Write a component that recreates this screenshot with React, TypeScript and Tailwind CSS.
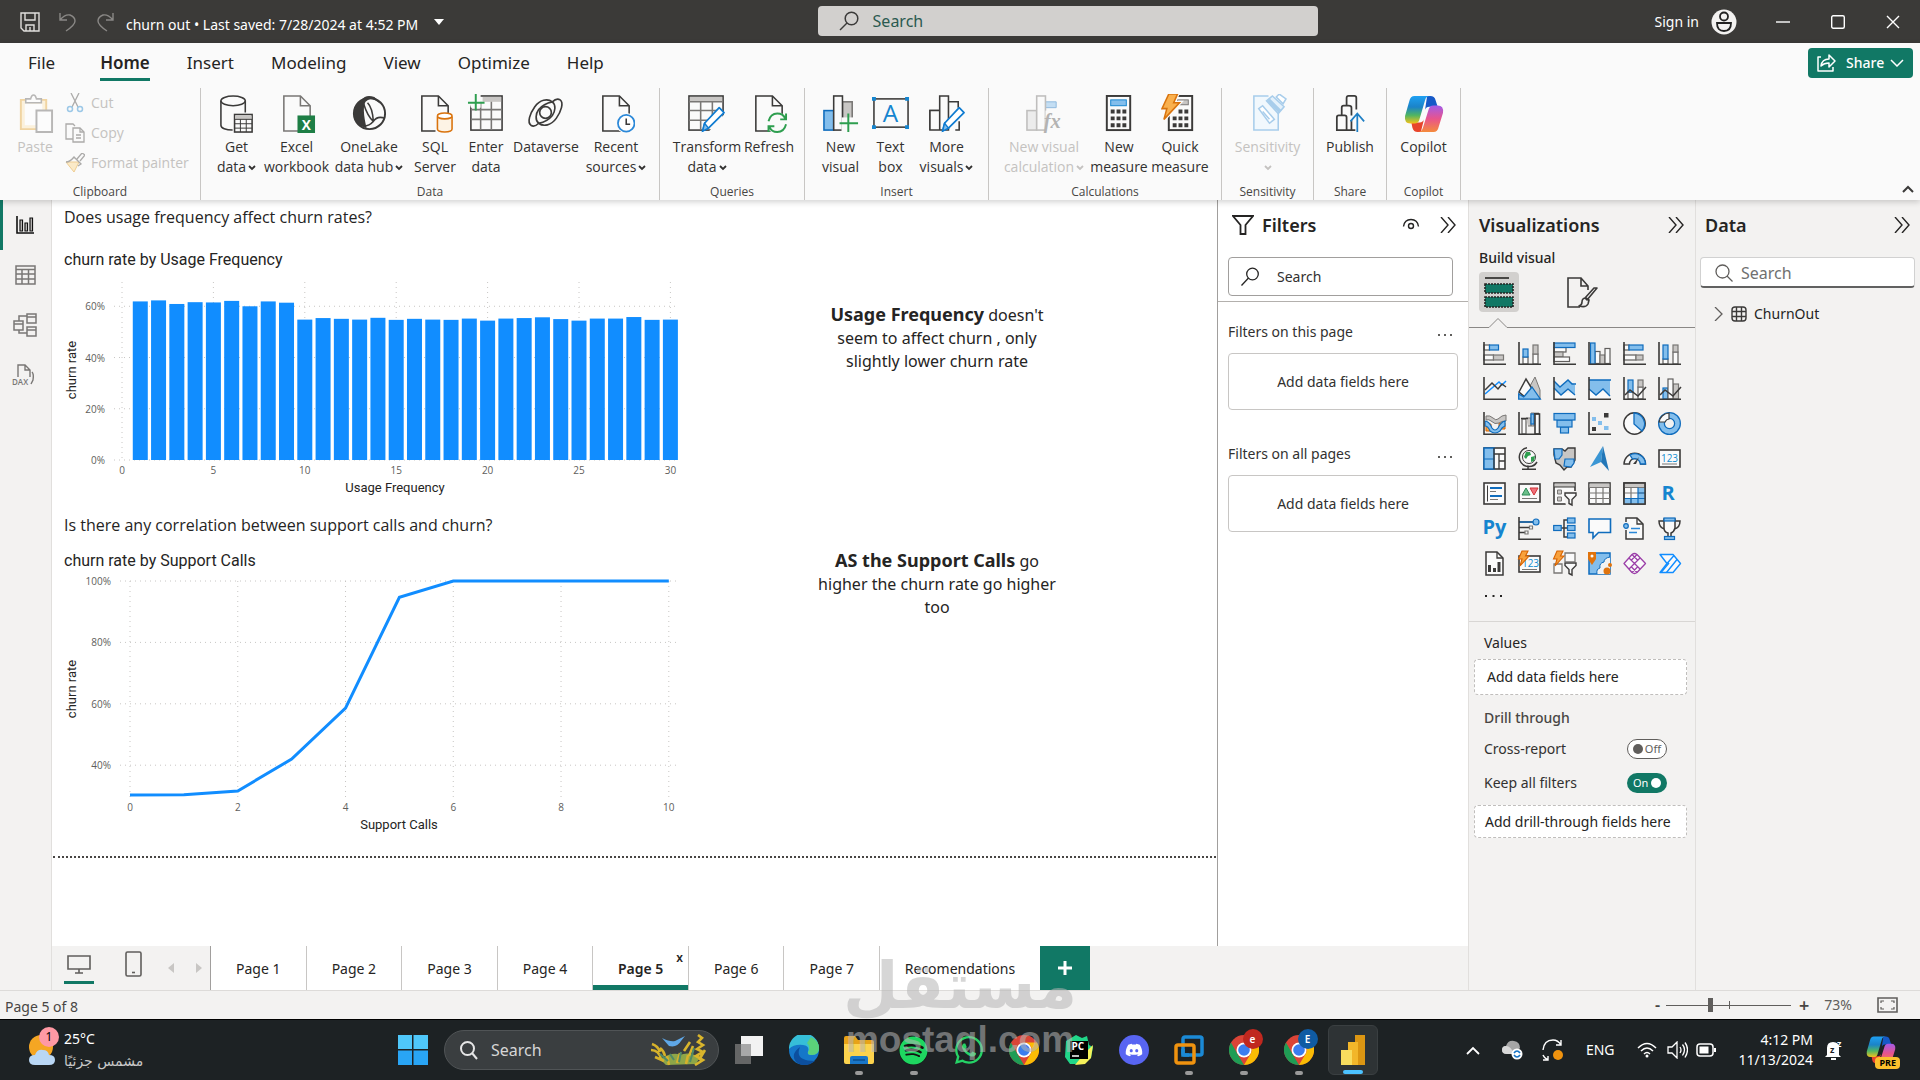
import React from "react";
import { FaDiscord, FaSpotify, FaWhatsapp } from "react-icons/fa";

const D = "#3b3a39";
const B = "#83beec";
const BL = "#0f6cbd";
const G = "#c8c6c4";
const GL = "#797775";
const W = "#fafafa";

type IconProps = { w?: number; h?: number; vb?: string; className?: string; children: React.ReactNode };
function Icon({ w = 24, h = 24, vb, className = "", children }: IconProps) {
  return (
    <svg width={w} height={h} viewBox={vb ?? `0 0 ${w} ${h}`} fill="none" className={`shrink-0 ${className}`} aria-hidden="true">
      {children}
    </svg>
  );
}

const Axes = () => <path d="M1 0v22.2h22" stroke={D} strokeWidth="1.6" />;
const Bolt = () => <path d="M4 -1h6L7.500 4H11L2 14l2-7H0.500z" fill="#f8a13c" stroke="#d86300" strokeWidth="1.100" />;
const Funnel = () => <path d="M12 11h11v2.500l-4 4V23l-3-1.500v-4l-4-4z" fill={W} stroke={D} strokeWidth="1.400" />;

function R({ x, y, w, h, c }: { x: number; y: number; w: number; h: number; c: "b" | "g" | "w" | "d" }) {
  const fill = c === "b" ? B : c === "g" ? G : W;
  const stroke = c === "b" ? BL : c === "g" ? GL : c === "w" ? "#605e5c" : D;
  return <rect x={x} y={y} width={w} height={h} fill={fill} stroke={stroke} strokeWidth={c === "d" ? 1.6 : 1.2} />;
}

const gallery: { name: string; art: React.ReactNode }[] = [
  { name: "Stacked bar chart", art: <><R x={1} y={3} w={5.5} h={5} c="w" /><R x={6.5} y={3} w={9} h={5} c="b" /><R x={1} y={13} w={9.5} h={5} c="w" /><R x={10.5} y={13} w={10} h={5} c="g" /><Axes /></> },
  { name: "Stacked column chart", art: <><R x={5} y={15} w={5} h={7} c="w" /><R x={5} y={7} w={5} h={8} c="b" /><R x={15} y={12} w={5} h={10} c="w" /><R x={15} y={3} w={5} h={9} c="g" /><Axes /></> },
  { name: "Clustered bar chart", art: <><R x={1} y={5.5} w={12} h={4.500} c="w" /><R x={1} y={10} w={9} h={5} c="g" /><R x={1} y={15} w={15.5} h={4.500} c="w" /><R x={1} y={1} w={21} h={4.500} c="b" /><Axes /></> },
  { name: "Clustered column chart", art: <><R x={7} y={9.5} w={5} h={12} c="w" /><R x={12} y={13} w={5} h={9} c="g" /><R x={17} y={6.5} w={5} h={15} c="w" /><R x={2.5} y={1} w={4.500} h={21} c="b" /><Axes /></> },
  { name: "100% stacked bar chart", art: <><R x={1} y={3} w={5} h={5} c="w" /><R x={6} y={3} w={14} h={5} c="b" /><R x={1} y={13} w={12} h={5} c="w" /><R x={13} y={13} w={7} h={5} c="g" /><Axes /></> },
  { name: "100% stacked column chart", art: <><R x={5} y={17} w={5} h={5} c="w" /><R x={5} y={3} w={5} h={14} c="b" /><R x={15} y={10} w={5} h={12} c="w" /><R x={15} y={3} w={5} h={7} c="g" /><Axes /></> },

  { name: "Line chart", art: <><path d="M2 17 16 5l3 3 4-4" stroke="#118dff" strokeWidth="1.500" /><path d="m2 13 7-7 6 6 4-5 4 3" stroke={D} strokeWidth="1.500" /><Axes /></> },
  { name: "Area chart", art: <><path d="m12 9 5-9 5 13v9H12z" fill={G} stroke={GL} /><path d="m1 15 7-13 8 13-8 6z" fill={W} stroke={D} strokeWidth="1.500" /><path d="M.700 22.200V17l5 3L14 10l8.300 12z" fill={B} stroke={BL} strokeWidth="1.300" /></> },
  { name: "Stacked area chart", art: <><path d="M1 16v6h21v-6z" fill={W} /><path d="m1 4 6 6 8-7 7 5v10l-7-7-7 7-7-7z" fill={B} /><path d="m1 4 6 6 8-7 4 4h4M1 11l7 7 7-6 7 6" stroke={BL} strokeWidth="1.400" /><Axes /></> },
  { name: "100% stacked area chart", art: <><path d="M1 12v10h21V12z" fill={W} /><path d="M1 3h21v16l-7-7-7 6-7-6z" fill={B} /><path d="M1 3h22M1 12l7 6 7-6 7 7" stroke={BL} strokeWidth="1.400" /><Axes /></> },
  { name: "Line and stacked column chart", art: <><R x={5} y={15} w={5} h={7} c="w" /><R x={5} y={3} w={5} h={12} c="b" /><R x={15} y={10} w={5} h={12} c="w" /><R x={15} y={3} w={5} h={7} c="g" /><path d="m2 18 5-5 8 6 8-9" stroke={D} strokeWidth="1.500" /><Axes /></> },
  { name: "Line and clustered column chart", art: <><R x={5} y={11} w={5} h={11} c="b" /><R x={15} y={7} w={5.500} h={15} c="g" /><R x={10} y={2} w={5} h={20} c="w" /><path d="m2 18 5-5 8 6 8-9" stroke={D} strokeWidth="1.500" /><Axes /></> },

  { name: "Ribbon chart", art: <><path d="M3 12h5v7H3zM16 11h6v6h-6z" fill="#f4a94a" stroke="#d86300" /><path d="M3 4q4-1 7 2t5 1q4-4 8-4v6q-5 0-7 2-4 2-8-2-2-2-5-1z" fill={G} stroke={GL} /><path d="M2 9q4 0 7 7 3 4 6 0 3-6 7-7v5q-3 1-5 5-5 4-10 0-2-5-5-5z" fill={B} stroke={BL} strokeWidth="1.200" /><Axes /></> },
  { name: "Waterfall chart", art: <><R x={4} y={7} w={4} h={15} c="w" /><path d="M8 6h5v8h-3M13 1h3v13h-3z" fill={G} stroke={GL} /><R x={13} y={2} w={3} h={10} c="b" /><R x={17} y={2} w={4.500} h={20} c="d" /><path d="M3 6.500h7M16 1.500h5" stroke={D} strokeWidth="1.500" /><Axes /></> },
  { name: "Funnel", art: <><R x={7.5} y={15} w={8} h={6} c="b" /><R x={4} y={8} w={15} h={7} c="b" /><R x={1} y={1.500} w={21} h={6.500} c="b" /></> },
  { name: "Scatter chart", art: <><path d="M4 5h4v4H4zM10 9h4v4h-4zM16 14h4.500v4H16z" fill={B} /><path d="M16 1h4.500v4.500H16zM4 15h4v4H4z" fill={D} /><Axes /></> },
  { name: "Pie chart", art: <><circle cx="11.500" cy="11.500" r="10.700" fill={W} stroke={D} strokeWidth="1.500" /><path d="M11 1a11 11 0 0 1 8 18l-8-7z" fill={B} stroke={BL} strokeWidth="1.300" /></> },
  { name: "Donut chart", art: <><circle cx="11.500" cy="11.500" r="8" stroke={BL} strokeWidth="7" /><circle cx="11.500" cy="11.500" r="8" stroke={B} strokeWidth="4.500" /><path d="M1 10A11 11 0 0 1 11 1v6a5 5 0 0 0-4 3z" fill={W} stroke={D} strokeWidth="1.200" /></> },

  { name: "Treemap", art: <><R x={1} y={1} w={21} h={21} c="d" /><path d="M1 1h10v21H1z" fill={B} stroke={BL} strokeWidth="1.400" /><path d="M1 12h10" stroke={BL} /><path d="M11 7h11M16 7v15M16 14h6M11 1v21" stroke={D} strokeWidth="1.300" /></> },
  { name: "Map", art: <><circle cx="11" cy="10" r="6.500" fill={W} stroke={D} /><path d="M8 5h4l1 3-3 1-2 3-2-2zM13 10l4-1-1 5-3 1z" fill="#2e9e4f" /><path d="M9 .800A9.500 9.500 0 1 0 19 15M10 18.500v3.500M4 22.200h14" stroke={D} strokeWidth="1.500" /></> },
  { name: "Filled map", art: <><path d="M1 2h8l3 2 3-3h7v12l-4 7h-4l-3 3-4-5-4-2-2-8z" fill={G} stroke={D} strokeWidth="1.400" /><path d="M1 2h8v6l-3 4H2zM12 12h9v4l-3 4-7-1z" fill={B} stroke={BL} strokeWidth="1.200" /></> },
  { name: "Azure map", art: <><path d="M15-1 2 20l11-5z" fill="#3a96d4" /><path d="m15-1 6 25-8-9z" fill="#2277b8" /></> },
  { name: "Gauge", art: <><path d="M1 17a10.700 10.700 0 0 1 21.500 0h-5a5.500 5.500 0 0 0-11 0z" fill={W} stroke={D} strokeWidth="1.400" /><path d="M7 8a10.500 10.500 0 0 1 15.500 9h-5a6 6 0 0 0-8-5z" fill={B} stroke={BL} strokeWidth="1.300" /><path d="m10 17 6-7-3 7z" fill={D} /></> },
  { name: "Card", art: <><R x={1} y={3} w={21} h={17} c="d" /><text x="11.500" y="15" textAnchor="middle" fontSize="10" fill="#118dd0" fontFamily="Open Sans">123</text><path d="M4 17h15" stroke={GL} /></> },

  { name: "Multi-row card", art: <><R x={1} y={1} w={21} h={21} c="d" /><path d="M4.500 3.500v16" stroke={D} /><path d="M7 6h12M7 14h12" stroke={BL} strokeWidth="2.200" /><path d="M7 9.500h6M7 17.500h8" stroke={GL} strokeWidth="1.200" /></> },
  { name: "KPI", art: <><R x={1} y={2} w={21} h={18} c="d" /><path d="M4 13 8 6l4 7z" fill="#6bbf8a" stroke="#2e8b57" /><path d="M12 6h8l-4 7z" fill="#f1707b" stroke="#d13438" /><path d="M4 16.500h15" stroke={GL} /></> },
  { name: "Slicer", art: <><R x={1} y={1} w={21} h={21} c="d" /><path d="M1.500 1.500h20V5h-20z" fill={G} /><path d="M1 5h21" stroke={D} /><path d="M4.500 8h4v4h-4zM4.500 15h4v4h-4z" fill={G} stroke={GL} /><path d="M10 9h14v15H13z" fill="#f3f2f1" /><Funnel /></> },
  { name: "Table", art: <><R x={1} y={1} w={21} h={21} c="d" /><path d="M1.500 1.500h20V5h-20z" fill={G} /><path d="M1 5.500h21M1 11h21M1 16.500h21M8 5v17M15 5v17" stroke={GL} strokeWidth="1.200" /></> },
  { name: "Matrix", art: <><R x={1} y={1} w={21} h={21} c="d" /><path d="M15 6h7v16H1v-5h14z" fill={B} /><path d="M1.500 1.500h20V5h-20z" fill={G} /><path d="M1 5.500h21M1 11h21M8 5v17" stroke={GL} strokeWidth="1.200" /><path d="M15 5.500v16.500M15 11h7M1 16.500h21M8 16.500V22" stroke={BL} strokeWidth="1.200" /><rect x="1" y="1" width="21" height="21" stroke={D} strokeWidth="1.500" /></> },
  { name: "R script visual", art: <text x="10" y="18" textAnchor="middle" fontSize="20" fontWeight="700" fill="#1585cf" fontFamily="Open Sans">R</text> },

  { name: "Python visual", art: <text x="11.500" y="17" textAnchor="middle" fontSize="20" fontWeight="700" fill="#1585cf" fontFamily="Open Sans">Py</text> },
  { name: "Key influencers", art: <><path d="M1 5h15M1 10.500h10M1 15.500h6" stroke={D} strokeWidth="1.400" /><path d="M1 5h15" stroke={BL} strokeWidth="1.400" /><circle cx="18" cy="5" r="3" fill={B} stroke={BL} strokeWidth="1.200" /><path d="M11.500 9h3v3h-3zM7 14h3v3H7z" fill={W} stroke={GL} strokeWidth="1.200" /><Axes /></> },
  { name: "Decomposition tree", art: <><path d="M8 11h7M15 3h-4v17h4" stroke={D} strokeWidth="1.500" /><R x={0.7} y={8.500} w={7.500} h={5} c="b" /><R x={14.500} y={1} w={7.500} h={5} c="b" /><R x={14.500} y={8.500} w={7.500} h={5} c="b" /><R x={14.500} y={16} w={7.500} h={5} c="b" /></> },
  { name: "Q&A", art: <path d="M1 2h21.500v13.500H10.500L5 21v-5.500H1z" fill={W} stroke={BL} strokeWidth="1.600" /> },
  { name: "Narrative", art: <><path d="M3 1h11l6 6v15H3z" fill={W} stroke={D} strokeWidth="1.500" /><path d="M14 1v6h6" stroke={D} strokeWidth="1.300" /><path d="M0 5h6v8H0z" fill="#f3f2f1" /><circle cx="3" cy="9" r="2.300" fill={B} stroke={BL} strokeWidth="1.200" /><path d="M8 11.500h9M6 15.500h8" stroke="#2b88d8" strokeWidth="1.300" /></> },
  { name: "Goals", art: <><path d="M6 4H1q0 7 6 8M17 4h5q0 7-6 8" stroke={D} strokeWidth="1.500" /><path d="M6 2h11v9q-1 4-4 5v4h-3v-4q-4-1-4-5z" fill={W} stroke={D} strokeWidth="1.500" /><R x={6} y={1} w={11} h={3} c="b" /><R x={6.500} y={19.500} w={10} h={3} c="b" /></> },

  { name: "Paginated report", art: <><path d="M3 0h11l6 6v17H3z" fill={W} stroke={D} strokeWidth="1.500" /><path d="M14 0v6h6" stroke={D} strokeWidth="1.300" /><path d="M5 13h3v7H5zM10 16h3v4h-3zM14.500 10h3v10h-3z" fill={D} /></> },
  { name: "Card (new)", art: <><R x={1} y={4} w={21} h={16} c="d" /><text x="12.500" y="15" textAnchor="middle" fontSize="10" fill="#118dd0" fontFamily="Open Sans">123</text><path d="M4 17.500h15" stroke={GL} /><Bolt /></> },
  { name: "Slicer (new)", art: <><path d="M12 1h10v9H12zM1 12h8v9H1z" fill={W} stroke={GL} strokeWidth="1.300" /><Bolt /><path d="M10 10h14v14H12z" fill="#f3f2f1" /><Funnel /></> },
  { name: "ArcGIS map", art: <><path d="M1 1h21v21H1z" fill={B} stroke={BL} strokeWidth="1.500" /><path d="M9 22q-1-5 3-6-1-5 4-6 0-4 6-5v17z" fill="#f3f2f1" /><path d="M9 22q-1-5 3-6-1-5 4-6 0-4 6-5" stroke={BL} /><path d="M0 0h8v7l-4 6-4-6z" fill="#e0730c" /><circle cx="4" cy="4" r="1.500" fill={W} /><circle cx="19" cy="19" r="3.500" fill="#e0730c" /><circle cx="22" cy="13" r="2" fill="#e0730c" /></> },
  { name: "Power Apps", art: <g stroke="#9b3fa8" strokeWidth="1.300" strokeLinejoin="round" fill={W}><path d="m1 11.500 8-9q2.500-2 5 0l8.500 9-8.500 9q-2.500 2-5 0z" /><path d="m6 6 5.500 5.500L6 17M11.500 11.500 17 6M11.500 11.500 17 17M9 2.500l5.500 5.500M14 2.500 8.500 8M9 20.500l5.500-5.500M14 20.500 8.500 15" fill="none" /></g> },
  { name: "Power Automate", art: <g stroke="#118dff" strokeWidth="1.400" strokeLinejoin="round" fill={W}><path d="M2 2.500h13l7.500 9-7.500 9H2l7-9z" /><path d="m9 11.500 7-8M3 20.500l8-9.500M8.500 20.500 19 7.500" fill="none" /></g> },
];

/* ---------- Ribbon drawings, 38 x 40 each ---------- */
const sw = { strokeWidth: 1.6 };
const Page = ({ c = D }: { c?: string }) => <><path d="M6 2h17l10 10v26H6z" fill={W} stroke={c} {...sw} /><path d="M23 2v10h10" stroke={c} {...sw} /></>;
const Pencil = () => <path d="m15 38 2-8L32 14l5 5-16 16z" fill="#fff" stroke="#0f7bd0" strokeWidth="1.800" strokeLinejoin="round" />;
const PencilTip = () => <path d="m15 38 2-8 4 5z" fill={B} stroke="#0f7bd0" strokeWidth="1.400" />;

const art = {
  getData: <><path d="M3 7v25c0 3 5 5 12 5M28 7v12" stroke={D} {...sw} /><ellipse cx="15.500" cy="7" rx="12.500" ry="5" fill={W} stroke={D} {...sw} /><rect x="17" y="21" width="18" height="18" fill={W} stroke={D} {...sw} /><path d="M17.500 22h17v4h-17z" fill={G} /><path d="M17 26h18M17 30.500h18M17 35h18M23 26v13M29 26v13" stroke={D} /></>,
  excel: <><Page c={GL} /><rect x="20" y="22" width="18" height="18" fill="#1e7e45" /><text x="29" y="36.500" textAnchor="middle" fontSize="14" fontWeight="700" fill="#fff" fontFamily="Open Sans">X</text></>,
  onelake: <><circle cx="20" cy="20" r="16" fill={W} stroke={D} strokeWidth="2" /><path d="M12 6q4-6 13-3 4 3 6 7-10-8-15-2-4 6 1 27Q5 32 4 22 4 12 12 6z" fill={D} /><path d="M14 10q4 13 10 18 4-6 12-3M18 9q5 5 6 19-4 5-10 5" stroke={D} {...sw} /></>,
  sql: <><Page /><path d="M20 20h18v20H20z" fill={W} /><path d="M22 23v13c0 4 15 4 15 0V23" fill="#fdf3e5" stroke="#d9730d" {...sw} /><ellipse cx="29.500" cy="22.500" rx="7.500" ry="3" fill="#fff" stroke="#d9730d" {...sw} /></>,
  enter: <><rect x="4" y="2" width="32" height="35" fill={W} stroke={D} {...sw} /><path d="M16 3h19v5H16z" fill={G} /><path d="M4 16h32M4 26h32M14 8v29M25 8v29" stroke={GL} {...sw} /><path d="M0 0h14v14H4z" fill={W} /><path d="M9 0v17M1 9h17" stroke="#2e9e4f" strokeWidth="2" /></>,
  dataverse: <g stroke={D} strokeWidth="1.700"><path d="M26 8C21 4 13 6 8 13 3 20 0 29 4 32c3 2 6 0 8-2" /><path d="M12 30c5 4 13 2 18-5 5-7 8-16 4-19-3-2-6 0-8 2" /><path d="M12 30c-4-3-3-10 0-14 4-5 9-7 14-8M26 8c4 3 3 10 0 14-4 5-9 7-14 8" /><circle cx="19" cy="19" r="6" /></g>,
  recent: <><Page /><circle cx="30" cy="30" r="10.500" fill={W} /><circle cx="30" cy="30" r="8.500" fill="#fff" stroke="#2b88d8" strokeWidth="1.800" /><path d="M30 25v6h4" stroke={D} {...sw} /></>,
  transform: <><rect x="1" y="2" width="35" height="35" fill={W} stroke={D} {...sw} /><path d="M2 3h33v5H2z" fill={G} /><path d="M1 8h35M1 17h35M1 27h26M13 8v29M25 8v20" stroke={GL} {...sw} /><path d="M20 40 38 20v20z" fill={W} /><Pencil /><PencilTip /></>,
  refresh: <><Page /><circle cx="28" cy="30" r="11" fill={W} /><path d="M19 28q2-8 9-8 6 0 8 5M37 20v6h-6M37 31q-2 8-9 8-6 0-8-5M19 39v-6h6" stroke="#2e9e4f" strokeWidth="2" /></>,
  newVisual: <><rect x="2" y="17" width="10" height="20" fill={B} stroke={BL} {...sw} /><rect x="21" y="8" width="10" height="29" fill={G} stroke={GL} {...sw} /><rect x="12" y="2" width="9" height="35" fill={W} stroke={D} {...sw} /><path d="M20 24h16v14H20z" fill={W} /><path d="M27 20v19M18 30h19" stroke="#2e9e4f" strokeWidth="2" /></>,
  textBox: <><rect x="2" y="5" width="35" height="29" fill={W} stroke={D} {...sw} /><path d="M0 3h4v4H0zM34 3h4v4h-4zM0 32h4v4H0zM34 32h4v4h-4z" fill="#1585cf" /><text x="19" y="29" textAnchor="middle" fontSize="25" fill="#1585cf" fontFamily="Open Sans">A</text></>,
  moreVisuals: <><path d="M2 37V17h10M21 8h10v6M28 37h4v-9" stroke={D} {...sw} /><path d="M2 17h10v20H2zM12 2h9v35h-9z" fill={W} stroke={D} {...sw} /><Pencil /><PencilTip /></>,
  visualCalc: <g opacity=".45"><rect x="2" y="17" width="10" height="20" fill="#ddd" stroke={GL} {...sw} /><path d="M21 8h11v6H21z" fill={B} stroke={BL} /><rect x="12" y="2" width="9" height="35" fill={W} stroke={GL} {...sw} /><path d="M21 17h15v20H21z" fill={W} /><text x="28" y="35" textAnchor="middle" fontSize="21" fontStyle="italic" fontWeight="700" fill="#605e5c" fontFamily="Liberation Serif">fx</text></g>,
  measure: <><rect x="7" y="2" width="24" height="35" fill={W} stroke={D} strokeWidth="2" /><rect x="11" y="6" width="16" height="6" fill={B} stroke="#1585cf" /><path d="M11 16h4v4h-4zM17 16h4v4h-4zM23 16h4v4h-4zM11 23h4v4h-4zM17 23h4v4h-4zM23 23h4v4h-4zM11 30h4v4h-4zM17 30h4v4h-4zM23 30h4v4h-4z" fill={D} /></>,
  quick: <><rect x="8" y="2" width="24" height="35" fill={W} stroke={D} strokeWidth="2" /><rect x="17" y="6" width="11" height="5" fill={G} stroke={GL} /><path d="M12 23h4v4h-4zM18 16h4v4h-4zM24 16h4v4h-4zM18 23h4v4h-4zM24 23h4v4h-4zM12 30h4v4h-4zM18 30h4v4h-4zM24 30h4v4h-4z" fill={D} /><path d="M8 0h9l-4 9h6L3 26l3-11H1z" fill="#f9b04e" stroke="#fafafa" strokeWidth="4" /><path d="M8 0h9l-4 9h6L3 26l3-11H1z" fill="#f9b04e" stroke="#d9730d" strokeWidth="1.600" /></>,
  sensitivity: <g stroke="#a8cdeb" {...sw}><path d="M20 2H5v35h25V19" fill="#f1f8fd" /><path d="m10 15 4-3 12 14-5 4z" fill="#fff" /><path d="m14 18 7 8" /><path d="m18 7 6-5 12 11-6 7z" fill="#e4f1fb" /><path d="m20 6 12 12" strokeWidth="4" /><path d="m28 3 3-3 7 5-3 5z" fill="#fff" /></g>,
  publish: <><path d="M16 12V4q0-2 2-2h6q2 0 2 2v12M11 22V14q0-2 2-2h5q3 0 3 2v8M21 37H6V24q0-2 2-2h6q2 0 2 2v13M21 27v10M21 37h4" stroke={D} strokeWidth="1.800" /><path d="M27 39V21M20 28l7-8 7 8" stroke="#1f7fc4" strokeWidth="1.800" /></>,
};

function CopilotLogo({ size, id }: { size: number; id: string }) {
  return (
    <svg width={size} height={size} viewBox="0 0 38 38" aria-hidden="true">
      <defs>
        <linearGradient id={`${id}a`} x1="0" y1="0" x2="0" y2="1"><stop offset="0" stopColor="#1ea0f2" /><stop offset=".4" stopColor="#1b83c8" /><stop offset=".7" stopColor="#4fb562" /><stop offset="1" stopColor="#f3c21b" /></linearGradient>
        <linearGradient id={`${id}b`} x1="0" y1="0" x2="0" y2="1"><stop offset="0" stopColor="#a35be8" /><stop offset=".5" stopColor="#e8548c" /><stop offset="1" stopColor="#f58a3c" /></linearGradient>
      </defs>
      <path d="M22 2h3q4 0 5 4l2 6h-8q-3 0-4 3z" fill="#1659c7" />
      <path d="M16 36h-3q-4 0-5-4l-1-5h8q3 0 4-3z" fill="#e8452c" />
      <path d="M10 2h15q-4 0-5 4l-5 17q-1 5-5 5H6q-6 0-5-7L5 7q1-5 5-5z" fill={`url(#${id}a)`} />
      <path d="M28 36H13q4 0 5-4l5-16q1-5 5-5h4q6 0 5 7l-4 13q-1 5-5 5z" fill={`url(#${id}b)`} />
    </svg>
  );
}

const Caret = () => (
  <svg width="8" height="6" viewBox="0 0 8 6" fill="none" className="ml-0.5 inline-block" aria-hidden="true">
    <path d="m1 1 3 3 3-3" stroke="currentColor" strokeWidth="1.8" />
  </svg>
);

type Item = { w: string; icon: React.ReactNode; l1: string; l2?: string; drop?: boolean; off?: boolean };
function RibbonItem({ w, icon, l1, l2, drop, off }: Item) {
  return (
    <button type="button" disabled={off} className={`flex flex-col items-center pt-1.5 ${w} ${off ? "text-[#c4c2c0]" : "text-[#323130]"}`}>
      {icon}
      <span className="mt-[3px] text-sm leading-5 whitespace-nowrap">
        {l1}
        <br />
        {l2}
        {drop && <Caret />}
      </span>
    </button>
  );
}
const Rib = ({ children }: { children: React.ReactNode }) => <Icon w={38} h={40} vb="0 0 39 41">{children}</Icon>;

function RibbonGroup({ w, label, children }: { w: string; label: string; children: React.ReactNode }) {
  return (
    <section className={`flex flex-col justify-between border-r border-[#c8c6c4] ${w}`}>
      <div className="flex justify-center">{children}</div>
      <h2 className="text-center text-xs leading-4 text-[#484644]">{label}</h2>
    </section>
  );
}

const groups: { w: string; label: string; items: Item[] }[] = [
  {
    w: "w-[459px]", label: "Data", items: [
      { w: "w-[51px]", icon: <Rib>{art.getData}</Rib>, l1: "Get", l2: "data", drop: true },
      { w: "w-[69px]", icon: <Rib>{art.excel}</Rib>, l1: "Excel", l2: "workbook" },
      { w: "w-[76px]", icon: <Rib>{art.onelake}</Rib>, l1: "OneLake", l2: "data hub", drop: true },
      { w: "w-[56px]", icon: <Rib>{art.sql}</Rib>, l1: "SQL", l2: "Server" },
      { w: "w-[46px]", icon: <Rib>{art.enter}</Rib>, l1: "Enter", l2: "data" },
      { w: "w-[74px]", icon: <Rib>{art.dataverse}</Rib>, l1: "Dataverse" },
      { w: "w-[66px]", icon: <Rib>{art.recent}</Rib>, l1: "Recent", l2: "sources", drop: true },
    ],
  },
  {
    w: "w-[145px]", label: "Queries", items: [
      { w: "w-[74px]", icon: <Rib>{art.transform}</Rib>, l1: "Transform", l2: "data", drop: true },
      { w: "w-[50px]", icon: <Rib>{art.refresh}</Rib>, l1: "Refresh" },
    ],
  },
  {
    w: "w-[184px]", label: "Insert", items: [
      { w: "w-[48px]", icon: <Rib>{art.newVisual}</Rib>, l1: "New", l2: "visual" },
      { w: "w-[52px]", icon: <Rib>{art.textBox}</Rib>, l1: "Text", l2: "box" },
      { w: "w-[60px]", icon: <Rib>{art.moreVisuals}</Rib>, l1: "More", l2: "visuals", drop: true },
    ],
  },
  {
    w: "w-[233px]", label: "Calculations", items: [
      { w: "w-[88px]", icon: <Rib>{art.visualCalc}</Rib>, l1: "New visual", l2: "calculation", drop: true, off: true },
      { w: "w-[62px]", icon: <Rib>{art.measure}</Rib>, l1: "New", l2: "measure" },
      { w: "w-[60px]", icon: <Rib>{art.quick}</Rib>, l1: "Quick", l2: "measure" },
    ],
  },
  { w: "w-[92px]", label: "Sensitivity", items: [{ w: "w-[80px]", icon: <Rib>{art.sensitivity}</Rib>, l1: "Sensitivity", drop: true, off: true }] },
  { w: "w-[73px]", label: "Share", items: [{ w: "w-[60px]", icon: <Rib>{art.publish}</Rib>, l1: "Publish" }] },
  { w: "w-[74px]", label: "Copilot", items: [{ w: "w-[60px]", icon: <CopilotLogo size={40} id="rib" />, l1: "Copilot" }] },
];

function TitleBar() {
  return (
    <header className="flex h-[43px] shrink-0 items-center bg-[#3b3a38] text-white">
      <div className="flex flex-[19] items-center">
        <button type="button" aria-label="Save" className="ml-5">
          <Icon w={20} h={20}><path d="M1 1h18v18H4l-3-3zM5 1v7h10V1M6 19v-6h8v6M10 15v4" stroke="#e1dfdd" strokeWidth="1.4" /></Icon>
        </button>
        <button type="button" aria-label="Undo" className="ml-[19px]">
          <Icon w={18} h={20}><path d="M1 1v7h7M1 8q5-6 10-5 5 2 5 6 0 4-9 10" stroke="#8a8886" strokeWidth="1.4" /></Icon>
        </button>
        <button type="button" aria-label="Redo" className="ml-[19px]">
          <Icon w={18} h={20}><path d="M17 1v7h-7M17 8q-5-6-10-5-5 2-5 6 0 4 9 10" stroke="#8a8886" strokeWidth="1.4" /></Icon>
        </button>
        <h1 className="ml-3 pt-1.5 text-sm whitespace-nowrap">churn out • Last saved: 7/28/2024 at 4:52 PM</h1>
        <button type="button" aria-label="File details" className="ml-4">
          <Icon w={10} h={6}><path d="M0 0h10L5 6z" fill="#fff" /></Icon>
        </button>
      </div>
      <label className="mb-px flex h-[30px] w-[500px] items-center rounded-sm bg-[#d2d0ce] pl-[21px] text-[#3b3a39]">
        <Icon w={20} h={20}><circle cx="12.5" cy="7.500" r="6.300" stroke="currentColor" strokeWidth="1.5" /><path d="m8 12-7 7" stroke="currentColor" strokeWidth="1.5" /></Icon>
        <input aria-label="Search" placeholder="Search" className="ml-3.5 min-w-0 flex-1 bg-transparent text-base outline-none placeholder:text-[#2a5a50]" />
      </label>
      <div className="flex flex-[14] items-center justify-end">
        <button type="button" className="mr-3 text-sm">Sign in</button>
        <Icon w={26} h={26}><circle cx="13" cy="13" r="12.500" fill="#f3f2f1" /><circle cx="13" cy="7.500" r="4" stroke="#222" strokeWidth="1.8" /><path d="M6 14h14q0 8-7 8t-7-8z" stroke="#222" strokeWidth="1.8" /></Icon>
        <button type="button" aria-label="Minimize" className="ml-[39px]"><Icon w={14} h={14}><path d="M0 7h14" stroke="#fff" strokeWidth="1.4" /></Icon></button>
        <button type="button" aria-label="Maximize" className="ml-[41px]"><Icon w={14} h={14}><rect x=".7" y=".7" width="12.600" height="12.600" rx="1.500" stroke="#fff" strokeWidth="1.400" /></Icon></button>
        <button type="button" aria-label="Close" className="mr-5 ml-[41px]"><Icon w={14} h={14}><path d="m1 1 12 12M13 1 1 13" stroke="#fff" strokeWidth="1.400" /></Icon></button>
      </div>
    </header>
  );
}

const menu = ["File", "Home", "Insert", "Modeling", "View", "Optimize", "Help"];

function Menu() {
  return (
    <nav className="flex h-[45px] items-start bg-[#fafafa] pr-[7px] pl-7 text-[17px] text-[#252423]">
      <ul className="flex gap-[37px] pt-1">
        {menu.map((m) => (
          <li key={m} className={m === "File" ? "mr-[8px]" : ""}>
            <button type="button" className={`border-b-[3px] pt-1 pb-[3px] leading-6 ${m === "Home" ? "border-[#117865] font-semibold" : "border-transparent"}`}>{m}</button>
          </li>
        ))}
      </ul>
      <button type="button" className="mt-[5px] ml-auto flex h-[30px] w-[105px] items-center rounded bg-[#117865] pl-2 text-sm font-medium text-white">
        <Icon w={20} h={20}><path d="M5 4H2v14h15v-4M5 13q1-7 8-7V2l6 6-6 6v-4q-5 0-8 3z" stroke="#fff" strokeWidth="1.500" strokeLinejoin="round" /></Icon>
        <span className="ml-2.5">Share</span>
        <Icon w={14} h={8} className="ml-1.5"><path d="m1 1 6 6 6-6" stroke="#fff" strokeWidth="1.500" /></Icon>
      </button>
    </nav>
  );
}

function Ribbon() {
  return (
    <div className="relative z-10 shrink-0 bg-[#fafafa] shadow-[0_2px_6px_rgba(0,0,0,0.18)]">
      <Menu />
      <div className="flex h-28 items-stretch font-['Open_Sans']">
        <section className="flex w-[201px] flex-col justify-between border-r border-[#c8c6c4] text-[#c4c2c0]">
          <div className="flex pl-[15px]">
            <button type="button" disabled className="flex w-[40px] flex-col items-center pt-1.5 text-sm">
              <Rib><g opacity=".5"><path d="M5 6h26v30H5z" fill="#fde9c0" stroke="#e8b04c" strokeWidth="2" /><path d="M9 10h18v22H9z" fill="#fff" /><path d="M10 9V5h5q1-4 3-4t3 4h5v4z" fill="#fff" stroke={GL} strokeWidth="1.600" /><path d="M21 17h16v22H21z" fill="#fff" stroke={GL} strokeWidth="2" /></g></Rib>
              <span className="mt-[3px] leading-5">Paste</span>
            </button>
            <ul className="ml-2.5 flex flex-col gap-2.5 pt-[5px] text-sm leading-5">
              <li><button type="button" disabled className="flex items-center gap-1.5"><Icon w={20} h={20}><g opacity=".6"><path d="m6 0 7 14M14 0 7 14" stroke={GL} strokeWidth="1.300" /><circle cx="5" cy="16" r="2.500" stroke="#5fa8dc" strokeWidth="1.500" /><circle cx="15" cy="16" r="2.500" stroke="#5fa8dc" strokeWidth="1.500" /></g></Icon>Cut</button></li>
              <li><button type="button" disabled className="flex items-center gap-1.5"><Icon w={20} h={20}><g opacity=".6" stroke={GL} strokeWidth="1.300"><path d="M8 16H1V1h7l2 2M8 5h7l4 4v10H8z" /><path d="M15 5v4h4M11 12h5M11 15h5" /></g></Icon>Copy</button></li>
              <li><button type="button" disabled className="flex items-center gap-1.5"><Icon w={20} h={20}><g opacity=".6"><path d="M1 9h13l-5 10z" fill="#fde0a8" stroke="#e8b04c" /><path d="m9 4 7 7M1 9q4 0 8-5l7 7-3 2M12 6l5-6 3 2-5 6" stroke={GL} strokeWidth="1.300" /></g></Icon>Format painter</button></li>
            </ul>
          </div>
          <h2 className="text-center text-xs leading-4 text-[#484644]">Clipboard</h2>
        </section>
        {groups.map((g) => (
          <RibbonGroup key={g.label} w={g.w} label={g.label}>
            {g.items.map((i) => <RibbonItem key={i.l1 + (i.l2 ?? "")} {...i} />)}
          </RibbonGroup>
        ))}
        <button type="button" aria-label="Collapse ribbon" className="mt-auto mr-1.5 mb-[7px] ml-auto">
          <Icon w={12} h={8}><path d="m1 7 5-5 5 5" stroke={D} strokeWidth="2" /></Icon>
        </button>
      </div>
    </div>
  );
}

function Rail() {
  return (
    <nav className="flex w-[52px] shrink-0 flex-col border-r border-[#e1dfdd] bg-[#f3f2f1]">
      <button type="button" aria-label="Report view" className="flex h-[50px] items-center border-l-[3px] border-[#117865] pl-[13px]">
        <Icon w={18} h={20}><path d="M1 1v17h17" stroke="#111" strokeWidth="1.600" /><path d="M4 5h2.500v11H4zM9 8h2.500v8H9zM14 3h2.500v13H14z" fill={G} stroke="#111" strokeWidth="1.200" /></Icon>
      </button>
      <button type="button" aria-label="Table view" className="flex h-[50px] items-center pl-[15px]">
        <Icon w={21} h={20}><path d="M1 1h19v18H1zM1 4.500h19M1 9h19M1 14h19M7 4.500V19M13.500 4.500V19" stroke={GL} strokeWidth="1.500" /></Icon>
      </button>
      <button type="button" aria-label="Model view" className="flex h-[50px] items-center pl-[13px]">
        <Icon w={24} h={24}><path d="M1 8h9v9H1zM14 1h9v9h-9zM14 14h9v9h-9zM1 11h9M14 4h9M14 17h9M6 8V3h8M6 17v3h8" stroke={GL} strokeWidth="1.500" /></Icon>
      </button>
      <button type="button" aria-label="DAX query view" className="flex h-[50px] items-center pl-[12px]">
        <Icon w={24} h={22}><path d="M6 13V1h7l5 5v7M13 1v5h5M20 8q2 2 1 8l-2 4" stroke={GL} strokeWidth="1.400" /><text x="0" y="21" fontSize="8" fontWeight="600" fill={GL} fontFamily="Open Sans">DAX</text></Icon>
      </button>
    </nav>
  );
}

/* ---------- Charts ---------- */
const usage = [61.9, 62.3, 60.9, 61.6, 61.5, 62.1, 60, 61.9, 61.4, 54.8, 55.4, 55.1, 54.8, 55.5, 54.7, 55.1, 54.8, 54.7, 55.2, 54.4, 55.2, 55.4, 55.7, 55, 54.4, 55.2, 55.2, 55.8, 54.7, 54.8];
const calls = [30.3, 30.4, 31.6, 42, 58.600, 94.700, 100, 100, 100, 100, 100];
const grid = { stroke: "#c8c6c4", strokeWidth: 1, strokeDasharray: "1 4" };
const axisTitle = { textAnchor: "middle" as const, fontSize: 13, fontFamily: "Roboto, sans-serif", fill: "#252423" };

function UsageChart() {
  const x = (v: number) => 58 + v * 18.28;
  const y = (v: number) => 185 - v * 2.562;
  return (
    <svg width="620" height="225" viewBox="0 0 620 225" fontFamily="Open Sans, sans-serif" fontSize="10" fill="#605e5c" role="img" aria-label="churn rate by Usage Frequency">
      {[0, 20, 40, 60].map((v) => (
        <g key={v}>
          <line x1="50" x2="612" y1={y(v)} y2={y(v)} {...grid} />
          <text x="41" y={y(v) + 4} textAnchor="end">{v}%</text>
        </g>
      ))}
      {[0, 5, 10, 15, 20, 25, 30].map((v) => (
        <g key={v}>
          <line x1={x(v)} x2={x(v)} y1="7" y2="185" {...grid} />
          <text x={x(v)} y="199" textAnchor="middle">{v}</text>
        </g>
      ))}
      {usage.map((v, i) => <rect key={i} x={x(i + 1) - 7.5} y={y(v)} width="15" height={185 - y(v)} fill="#118dff" />)}
      <text x="331" y="217" {...axisTitle}>Usage Frequency</text>
      <text transform="translate(12 95) rotate(-90)" {...axisTitle}>churn rate</text>
    </svg>
  );
}

function CallsChart() {
  const x = (v: number) => 66 + v * 53.880;
  const y = (v: number) => 10 + (100 - v) * 3.070;
  return (
    <svg width="620" height="265" viewBox="0 0 620 265" fontFamily="Open Sans, sans-serif" fontSize="10" fill="#605e5c" role="img" aria-label="churn rate by Support Calls">
      {[40, 60, 80, 100].map((v) => (
        <g key={v}>
          <line x1="56" x2="612" y1={y(v)} y2={y(v)} {...grid} />
          <text x="47" y={y(v) + 4} textAnchor="end">{v}%</text>
        </g>
      ))}
      {[0, 2, 4, 6, 8, 10].map((v) => (
        <g key={v}>
          <line x1={x(v)} x2={x(v)} y1="10" y2="227" {...grid} />
          <text x={x(v)} y="240" textAnchor="middle">{v}</text>
        </g>
      ))}
      <polyline points={calls.map((v, i) => `${x(i)},${y(v)}`).join(" ")} fill="none" stroke="#118dff" strokeWidth="3" />
      <text x="335" y="258" {...axisTitle}>Support Calls</text>
      <text transform="translate(12 118) rotate(-90)" {...axisTitle}>churn rate</text>
    </svg>
  );
}

function Canvas() {
  return (
    <main className="min-w-0 flex-1 overflow-hidden bg-white text-[#252423]">
      <div className="mx-px border-b-2 border-dotted border-[#484644] pl-[11px]">
        <section className="flex h-[308px]">
          <div className="w-[620px]">
            <h2 className="pt-[5px] font-['Open_Sans'] text-base leading-6">Does usage frequency affect churn rates?</h2>
            <h3 className="mt-[21px] font-[Roboto] text-base leading-5">churn rate by Usage Frequency</h3>
            <div className="mt-[5px]"><UsageChart /></div>
          </div>
          <p className="mt-[103px] ml-[128px] w-[250px] text-center text-base leading-[23px]">
            <strong className="text-lg leading-[23px] font-bold">Usage Frequency</strong> doesn't seem to affect churn , only slightly lower churn rate
          </p>
        </section>
        <section className="flex h-[348px]">
          <div className="w-[620px]">
            <h2 className="pt-[5px] font-['Open_Sans'] text-base leading-6">Is there any correlation between support calls and churn?</h2>
            <h3 className="mt-3.5 font-[Roboto] text-base leading-5">churn rate by Support Calls</h3>
            <div><CallsChart /></div>
          </div>
          <p className="mt-[41px] ml-[128px] w-[250px] text-center text-base leading-[23px]">
            <strong className="text-lg leading-[23px] font-bold">AS the Support Calls</strong> go higher the churn rate go higher too
          </p>
        </section>
      </div>
    </main>
  );
}

const Collapse = ({ label }: { label: string }) => (
  <button type="button" aria-label={label}>
    <Icon w={16} h={16}><path d="m1 0 7 8-7 8M8 0l7 8-7 8" stroke="#252423" strokeWidth="1.400" /></Icon>
  </button>
);

function FilterSection({ title }: { title: string }) {
  return (
    <section className="pl-2.5 text-sm text-[#323130]">
      <div className="flex items-center justify-between pr-4">
        <h3 className="leading-5">{title}</h3>
        <button type="button" aria-label={`Options for ${title}`} className="pt-1.5"><Icon w={14} h={4}><path d="M0 1h2v2H0zM6 1h2v2H6zM12 1h2v2h-2z" fill="#605e5c" /></Icon></button>
      </div>
      <div className="mt-[11px] mr-[10px] flex h-[57px] items-center justify-center rounded-sm border border-[#c8c6c4] bg-white">Add data fields here</div>
    </section>
  );
}

function Filters() {
  return (
    <aside className="w-[251px] shrink-0 border-l border-[#a19f9d] bg-white">
      <header className="flex items-center pt-[13px] pr-3 pl-3.5 text-[#252423]">
        <Icon w={22} h={20}><path d="M1 1h20l-7.500 9v9h-5v-9z" stroke="#252423" strokeWidth="1.800" /></Icon>
        <h2 className="ml-2 text-lg leading-6 font-semibold">Filters</h2>
        <button type="button" aria-label="Show filter pane" className="mr-5 ml-auto"><Icon w={18} h={14}><path d="M1.500 8.500q1-7 7.500-7t7.500 7" stroke="#252423" strokeWidth="1.400" /><circle cx="9" cy="8" r="2.500" stroke="#252423" strokeWidth="1.400" /></Icon></button>
        <Collapse label="Collapse filters" />
      </header>
      <div className="border-b border-[#b3b0ad] pt-5 pb-[5px] pl-2.5">
        <label className="flex h-[39px] w-[225px] items-center rounded-sm border border-[#a19f9d] pl-3 text-[#252423]">
          <Icon w={18} h={19}><circle cx="11.500" cy="7" r="5.800" stroke="currentColor" strokeWidth="1.300" /><path d="m7.500 11-7 7.500" stroke="currentColor" strokeWidth="1.300" /></Icon>
          <input aria-label="Search filters" placeholder="Search" className="ml-[18px] min-w-0 flex-1 bg-transparent text-sm outline-none placeholder:text-[#323130]" />
        </label>
      </div>
      <div className="flex flex-col gap-[34px] pt-5">
        <FilterSection title="Filters on this page" />
        <FilterSection title="Filters on all pages" />
      </div>
    </aside>
  );
}

function Toggle({ label, on }: { label: string; on?: boolean }) {
  return (
    <label className="flex items-center justify-between pr-[23px] pl-2.5 text-[#323130]">
      {label}
      <input type="checkbox" role="switch" defaultChecked={on} className="peer sr-only" />
      {on ? (
        <span className="flex h-5 w-10 items-center justify-between rounded-full bg-[#117865] px-1.5 text-[11px] text-white">On<i className="size-2.5 rounded-full bg-white" /></span>
      ) : (
        <span className="flex h-5 w-10 items-center justify-between rounded-full border border-[#605e5c] bg-white px-[5px] text-[11px] text-[#605e5c]"><i className="size-2.5 rounded-full bg-[#605e5c]" />Off</span>
      )}
    </label>
  );
}

function Visualizations() {
  return (
    <aside className="flex w-[227px] shrink-0 flex-col border-l border-[#e1dfdd] bg-[#f3f2f1] text-sm text-[#252423]">
      <header className="flex items-center justify-between pt-[13px] pr-[11px] pl-2.5">
        <h2 className="text-lg leading-6 font-semibold">Visualizations</h2>
        <Collapse label="Collapse visualizations" />
      </header>
      <h3 className="mt-[11px] pl-2.5 leading-5 font-medium">Build visual</h3>
      <div className="mt-1 flex gap-[47px] pl-2.5">
        <button type="button" aria-label="Build visual" className="flex size-10 items-center justify-center rounded-sm bg-[#d2d0ce]">
          <Icon w={30} h={32}><path d="M1 2h24" stroke="#252423" strokeWidth="1.600" /><path d="M1 8h28v9H1zM1 21h28v10H1z" fill="#117865" stroke="#252423" strokeWidth="1.600" strokeDasharray="2 1" /></Icon>
        </button>
        <button type="button" aria-label="Format visual" className="flex size-10 items-center">
          <Icon w={32} h={32}><path d="M14 31H2V2h13l7 8v4M15 2v8h7" stroke={D} strokeWidth="1.600" /><path d="M31 12 21 24l-2-2 9-10zM20 22q-4 0-4 4 0 3-3 4 7 2 9-2l1-4z" fill="#f3f2f1" stroke={D} strokeWidth="1.600" strokeLinejoin="round" /></Icon>
        </button>
      </div>
      <svg viewBox="0 0 226 12" className="mt-[5px] w-full shrink-0" fill="none" aria-hidden="true"><path d="M0 10.500h20l9-9 9 9h188" stroke="#8a8886" /></svg>
      <ul className="mt-[13px] grid grid-cols-[repeat(6,35px)] gap-y-[11px] pl-3.5">
        {gallery.map((g) => (
          <li key={g.name} className="size-6"><button type="button" aria-label={g.name}><Icon className="overflow-visible">{g.art}</Icon></button></li>
        ))}
      </ul>
      <button type="button" aria-label="More visuals" className="mt-[18px] ml-4 flex w-5"><Icon w={18} h={4}><path d="M0 1h2v2H0zM7.500 1h2v2h-2zM15 1h2v2h-2z" fill="#252423" /></Icon></button>
      <div className="mt-[23px] border-t border-[#d8d6d4] px-[5px] pt-[11px]">
        <h3 className="pl-2.5 leading-5">Values</h3>
        <div className="mt-1.5 mr-[3px] flex h-9 items-center rounded-sm border border-dashed border-[#c0bebc] bg-white pl-3">Add data fields here</div>
        <h3 className="mt-[13px] pl-2.5 leading-5 font-medium text-[#484644]">Drill through</h3>
        <div className="mt-[11px] flex flex-col gap-3.5 leading-5">
          <Toggle label="Cross-report" />
          <Toggle label="Keep all filters" on />
        </div>
        <div className="mt-3 mr-[3px] flex h-[33px] items-center rounded-sm border border-dashed border-[#c0bebc] bg-white pl-2.5 whitespace-nowrap">Add drill-through fields here</div>
      </div>
    </aside>
  );
}

function DataPane() {
  return (
    <aside className="w-[225px] shrink-0 border-l border-[#e1dfdd] bg-[#f3f2f1] text-sm text-[#252423]">
      <header className="flex items-center justify-between pt-[13px] pr-2.5 pl-[9px]">
        <h2 className="text-lg leading-6 font-semibold">Data</h2>
        <Collapse label="Collapse data" />
      </header>
      <label className="mt-5 mr-[5px] ml-1 flex h-[31px] items-center rounded border border-b-2 border-[#d1d1d1] border-b-[#616161] bg-white pt-px pl-3.5 text-[#605e5c]">
        <Icon w={18} h={18}><circle cx="7.500" cy="7.500" r="6.500" stroke="currentColor" strokeWidth="1.300" /><path d="m12 12 5.500 5.500" stroke="currentColor" strokeWidth="1.300" /></Icon>
        <input aria-label="Search data" placeholder="Search" className="ml-2 min-w-0 flex-1 bg-transparent text-base outline-none placeholder:text-[#707070]" />
      </label>
      <button type="button" className="mt-4 flex items-center pl-[18px] leading-5">
        <Icon w={9} h={14}><path d="m1 0 7 7-7 7" stroke="#605e5c" strokeWidth="1.300" /></Icon>
        <Icon w={16} h={16} className="ml-2"><rect x="1" y="1" width="14" height="14" rx="3" stroke={D} strokeWidth="1.400" /><path d="M5.500 1v14M10.500 1v14M1 5.500h14M1 10.500h14" stroke={D} strokeWidth="1.400" /></Icon>
        <span className="ml-[7px]">ChurnOut</span>
      </button>
    </aside>
  );
}

const pages = ["Page 1", "Page 2", "Page 3", "Page 4", "Page 5", "Page 6", "Page 7"];

function PageTabs() {
  return (
    <div className="flex h-11 shrink-0 bg-[#f3f2f1] text-sm text-[#252423]">
      <div className="flex w-[159px] border-r border-[#a19f9d] pl-3">
        <button type="button" aria-label="Desktop layout" className="flex h-[38px] w-[30px] flex-col items-center justify-between border-b-[3px] border-[#117865] pt-[9px]">
          <Icon w={24} h={20}><path d="M1 1h22v13H1zM12 14v4M8 18h8" stroke="#605e5c" strokeWidth="1.600" /></Icon>
        </button>
        <button type="button" aria-label="Mobile layout" className="ml-[31px] self-start pt-[5px]"><Icon w={18} h={26}><rect x="1" y="1" width="15" height="24" rx="1.500" stroke="#605e5c" strokeWidth="1.600" /><path d="M7 21.500h3" stroke="#605e5c" strokeWidth="1.600" /></Icon></button>
        <button type="button" aria-label="Previous page" className="ml-[25px]"><Icon w={6} h={10}><path d="M6 0v10L0 5z" fill="#c8c6c4" /></Icon></button>
        <button type="button" aria-label="Next page" className="ml-[22px]"><Icon w={6} h={10}><path d="M0 0v10l6-5z" fill="#c8c6c4" /></Icon></button>
      </div>
      <div className="flex w-[669px]">
        {pages.map((p) => {
          const active = p === "Page 5";
          return (
            <button key={p} type="button" className={`relative flex-1 border-r border-[#c8c6c4] bg-white pt-0.5 ${active ? "font-semibold shadow-[inset_0_-5px_0_#117865]" : ""}`}>
              {p}
              {active && <span className="absolute top-1 right-[5px] text-xs" aria-label="Close page">x</span>}
            </button>
          );
        })}
      </div>
      <button type="button" className="w-40 bg-white pt-0.5">Recomendations</button>
      <button type="button" aria-label="New page" className="flex w-[50px] items-center justify-center bg-[#117865]"><Icon w={14} h={14}><path d="M7 0v14M0 7h14" stroke="#fff" strokeWidth="3" /></Icon></button>
    </div>
  );
}

function StatusBar() {
  return (
    <footer className="flex h-[29px] shrink-0 items-center border-t border-[#dddbd9] bg-[#f3f2f1] pl-[5px] text-sm text-[#484644]">
      <span className="pt-1">Page 5 of 8</span>
      <button type="button" aria-label="Zoom out" className="ml-auto text-base font-semibold">-</button>
      <div className="relative mr-2 ml-1.5 flex w-[125px] items-center">
        <input type="range" aria-label="Zoom" min={10} max={400} defaultValue={145} className="h-4 w-full appearance-none bg-[linear-gradient(#605e5c,#605e5c)] bg-[length:100%_1px] bg-center bg-no-repeat [&::-webkit-slider-thumb]:h-3.5 [&::-webkit-slider-thumb]:w-[5px] [&::-webkit-slider-thumb]:appearance-none [&::-webkit-slider-thumb]:bg-[#605e5c]" />
        <i className="absolute left-1/2 h-2 w-px bg-[#605e5c]" />
      </div>
      <button type="button" aria-label="Zoom in" className="text-lg leading-5 font-semibold">+</button>
      <span className="ml-[15px] text-[#605e5c]">73%</span>
      <button type="button" aria-label="Fit to page" className="mr-[22px] ml-[25px]"><Icon w={21} h={16}><path d="M1 1h19v14H1z" stroke="#605e5c" strokeWidth="1.600" /><path d="M4 6V4h3M14 4h3v2M4 10v2h3M14 12h3v-2" stroke="#605e5c" strokeWidth="1.200" /></Icon></button>
    </footer>
  );
}

/* ---------- Taskbar ---------- */
function Chrome() {
  return (
    <Icon w={30} h={30}>
      <circle cx="15" cy="15" r="15" fill="#db4437" />
      <path d="M2 7.500 8.500 19l6.500 11A15 15 0 0 1 2 7.500z" fill="#1f9d55" />
      <path d="M28 7.500H15A7.500 7.500 0 0 1 21.500 19L15 30A15 15 0 0 0 28 7.500z" fill="#fbbc05" />
      <circle cx="15" cy="15" r="7.500" fill="#fff" /><circle cx="15" cy="15" r="5.800" fill="#3b7df0" />
    </Icon>
  );
}
function Badge({ children, c }: { children: React.ReactNode; c: string }) {
  return <span className={`absolute -top-1.5 -right-1 flex size-5 items-center justify-center rounded-full text-[10px] font-semibold text-white ${c}`}>{children}</span>;
}

const apps: { name: string; run?: boolean; art: React.ReactNode }[] = [
  { name: "Task view", art: <Icon w={30} h={30}><path d="M7 1h22v20H7z" fill="#f2f2f2" /><path d="M1 9h16v20H1z" fill="#6e6e6e" opacity=".9" /><path d="M7 9h10v12H7z" fill="#a8a8a8" /></Icon> },
  { name: "Edge", art: <Icon w={30} h={30}><circle cx="15" cy="15" r="15" fill="#1577c9" /><path d="M0 14A15 15 0 0 1 30 13q0 7-7 7-5 0-4-3 2-6-5-7Q5 9 0 14z" fill="#36bfd8" /><path d="M22 2q8 4 8 11 0 7-7 7-5 0-4-3 3-5-1-9z" fill="#5bd17a" /><path d="M11 12q-6 14 15 14-10 8-19 1-6-8 4-15z" fill="#0c4f9e" /></Icon> },
  { name: "File Explorer", run: true, art: <Icon w={30} h={28}><path d="M0 2q0-2 2-2h9l3 4h14q2 0 2 2v5H0z" fill="#e8a317" /><path d="M0 8h30v18q0 2-2 2H2q-2 0-2-2z" fill="#fcd34d" /><path d="M6 28v-6q0-2 2-2h14q2 0 2 2v6z" fill="#1976c8" /><path d="M9 24h12" stroke="#0b4f8f" strokeWidth="1.500" /></Icon> },
  { name: "Spotify", run: true, art: <span className="flex size-[29px] items-center justify-center rounded-full bg-[#121212]"><FaSpotify size={29} color="#1ed760" /></span> },
  { name: "WhatsApp", art: <FaWhatsapp size={32} color="#25d366" /> },
  { name: "Chrome", art: <Chrome /> },
  { name: "PyCharm", art: <Icon w={30} h={30}><path d="m2 6 10-6 6 3 5-2 2 9 4 2-2 11-10 6H6L1 22z" fill="#21d789" /><path d="m19 20 10-10-2 13-6 6-10 1z" fill="#f5f15a" /><path d="M6 6h18v18H6z" fill="#000" /><text x="7.500" y="15" fontSize="10" fontWeight="700" fill="#fff" fontFamily="Open Sans">PC</text><path d="M8 21h7" stroke="#fff" strokeWidth="1.500" /></Icon> },
  { name: "Discord", art: <span className="flex size-[30px] items-center justify-center rounded-full bg-[#5865f2]"><FaDiscord size={18} color="#fff" /></span> },
  { name: "VMware", run: true, art: <Icon w={30} h={30}><rect x="9" y="2" width="19" height="18" rx="2" stroke="#1b8ad6" strokeWidth="3.500" /><rect x="2" y="10" width="18" height="18" rx="2" stroke="#f0930f" strokeWidth="3.500" /><path d="M9 14v6h6" stroke="#1b8ad6" strokeWidth="3.500" /></Icon> },
  { name: "Chrome profile e", run: true, art: <><Chrome /><Badge c="bg-[#c0281f]">e</Badge></> },
  { name: "Chrome profile E", run: true, art: <><Chrome /><Badge c="bg-[#0f5ba3]">E</Badge></> },
];

function Taskbar() {
  return (
    <footer className="flex h-[61px] shrink-0 items-center border-t border-black bg-[#1d2224] text-sm text-white">
      <button type="button" className="flex w-[398px] items-center pl-7 text-left">
        <span className="relative">
          <Icon w={28} h={34}><circle cx="13" cy="14" r="12" fill="#f5a623" /><path d="M7 32q-6 0-6-5t6-5q2-6 8-5 5 0 6 5 6 0 6 5t-6 5z" fill="#b9d7f5" /></Icon>
          <span className="absolute -top-1.5 left-[11px] flex size-5 items-center justify-center rounded-full bg-[#ff99a4] text-xs text-black">1</span>
        </span>
        <span className="ml-2 flex flex-col leading-[22px]">
          <span>25°C</span>
          <span dir="rtl" lang="ar" className="font-['DejaVu_Sans'] text-sm leading-[22px] text-[#c8c8c8]">مشمس جزئيًا</span>
        </span>
      </button>
      <button type="button" aria-label="Start"><Icon w={30} h={30}><path d="M0 0h14v14H0zM15.500 0H30v14H15.500z" fill="#4fc8fa" /><path d="M0 15.500h14V30H0zM15.500 15.500H30V30H15.500z" fill="#29a5f5" /></Icon></button>
      <label className="ml-4 flex h-10 w-[275px] items-center rounded-full border border-[#505456] bg-[#3a3e40] pr-2 pl-3.5">
        <Icon w={20} h={20}><circle cx="8.500" cy="8.500" r="6.500" stroke="#e6e6e6" strokeWidth="2" /><path d="m13 13 5 6" stroke="#e6e6e6" strokeWidth="2" /></Icon>
        <input aria-label="Search Windows" placeholder="Search" className="ml-3 w-0 flex-1 bg-transparent text-base outline-none placeholder:text-[#d6d6d6]" />
        <Icon w={60} h={32}>
          <path d="M10 25q14-8 20-4 8-4 20 2l-4 7-30 1z" fill="#8ea648" />
          <path d="M2 10q6 2 8 8M1 16q8 0 10 9M5 23l9 4M10 14q4 3 5 8M19 31l-2-9M27 29l3-10M36 30l2-9" stroke="#d6b12b" strokeWidth="2.600" />
          <path d="M34 17l6-9M39 22l4-10M48 1l4 3-4 4 5 3-6 4 6 3-7 4 7 4-8 5M55 16l-6 10" stroke="#d9b52c" strokeWidth="2.600" />
          <path d="M44 14l-4 14M20 20l4 6M31 18l-2 10M10 20l8 7" stroke="#4f8a68" strokeWidth="2" />
          <path d="M12 4q8 4 13 3l10-5-4 5q-4 7-12 5z" fill="#5fa8e8" />
        </Icon>
      </label>
      <div className="ml-[2px] flex">
        {apps.map((a) => (
          <button key={a.name} type="button" aria-label={a.name} className="relative flex h-[58px] w-[55px] flex-col items-center justify-center">
            <span className="relative">{a.art}</span>
            {a.run && <i className="absolute bottom-1 h-1 w-2 rounded-full bg-[#9a9a9a]" />}
          </button>
        ))}
        <button type="button" aria-label="Power BI Desktop" className="relative mt-1 ml-0.5 flex h-[50px] w-[50px] items-center justify-center rounded-md border border-[#3a3f41] bg-[#2e3335]">
          <Icon w={24} h={30}><path d="M14 0h10v30H14z" fill="#dc9612" /><path d="M7 7h10v23H7z" fill="#f2b62a" /><path d="M0 15h11v15H0z" fill="#f8dc5e" /></Icon>
          <i className="absolute bottom-0 h-1 w-5 rounded-full bg-[#4cc2ff]" />
        </button>
      </div>
      <div className="ml-auto flex items-center">
        <button type="button" aria-label="Show hidden icons"><Icon w={14} h={9}><path d="m1 8 6-6 6 6" stroke="#fff" strokeWidth="1.800" /></Icon></button>
        <Icon w={22} h={20} className="ml-[22px]"><path d="M5 14q-5 0-5-4t4-4q2-6 8-5 6 1 6 7l-5 6z" fill="#a6a6a6" /><path d="M5 14q-5 0-5-4t4-4q5 0 8 8z" fill="#d8d8d8" /><circle cx="15" cy="14" r="5.500" fill="#fff" /><path d="M12 13q3-4 6 0M18 15q-3 4-6 0" stroke="#1673c4" strokeWidth="1.600" /></Icon>
        <Icon w={22} h={22} className="ml-[18px]"><path d="M1 11Q2 1 11 1q5 0 8 5M19 1v5h-5M1 21h5v-4M6 21q-4-2-5-5" stroke="#fff" strokeWidth="1.400" /><circle cx="16" cy="16" r="5" fill="#f0930f" /></Icon>
        <span className="ml-[22px]">ENG</span>
        <Icon w={20} h={16} className="ml-[22px]"><path d="M1 6q9-9 18 0M4 9q6-6 12 0M7 12q3-3 6 0" stroke="#fff" strokeWidth="1.500" /><circle cx="10" cy="14" r="1.500" fill="#fff" /></Icon>
        <Icon w={21} h={18} className="ml-2.5"><path d="M1 6h4l5-5v16l-5-5H1zM13 6q2 3 0 6M15.500 3.500q4 5 0 11M18 1.500q5 7 0 15" stroke="#fff" strokeWidth="1.300" /></Icon>
        <Icon w={21} h={14} className="ml-2"><rect x="1" y="1" width="16" height="12" rx="3" stroke="#fff" strokeWidth="1.500" /><rect x="3.500" y="3.500" width="9" height="7" fill="#fff" /><path d="M19 5v4" stroke="#fff" strokeWidth="2" /></Icon>
        <span className="ml-[22px] flex flex-col text-right leading-5"><span>4:12 PM</span><span>11/13/2024</span></span>
        <Icon w={19} h={20} className="ml-3 overflow-visible"><path d="M2 15V8q0-6 6-6t6 6v7l2 2H0zM6 18h5v2H6z" fill="#fff" /><text x="5" y="13" fontSize="9" fontWeight="700" fill="#1d2224" fontFamily="Open Sans">z</text><text x="12" y="7" fontSize="9" fontWeight="700" fill="#fff" fontFamily="Open Sans">z</text></Icon>
        <span className="relative mr-6 ml-[22px] flex">
          <CopilotLogo size={30} id="task" />
          <span className="absolute -right-1 -bottom-1 rounded bg-[#fbc02d] px-1 text-[9px] leading-3 font-bold text-black">PRE</span>
        </span>
      </div>
    </footer>
  );
}

export default function App() {
  return (
    <div className="relative flex h-screen flex-col overflow-hidden bg-white font-['Noto_Sans',sans-serif]">
      <TitleBar />
      <Ribbon />
      <div className="flex min-h-0 flex-1">
        <Rail />
        <div className="flex min-w-0 flex-1 flex-col">
          <div className="flex min-h-0 flex-1">
            <Canvas />
            <Filters />
          </div>
          <PageTabs />
        </div>
        <Visualizations />
        <DataPane />
      </div>
      <StatusBar />
      <Taskbar />
      <div className="pointer-events-none absolute bottom-5 left-1/2 flex w-60 -translate-x-1/2 flex-col items-center text-[#b6b6b6] opacity-55">
        <span lang="ar" dir="rtl" className="font-['DejaVu_Sans'] text-[64px] leading-[68px] font-bold">مستقل</span>
        <span className="font-['Liberation_Sans'] text-[37px] leading-10 font-bold">mostaql.com</span>
      </div>
    </div>
  );
}
